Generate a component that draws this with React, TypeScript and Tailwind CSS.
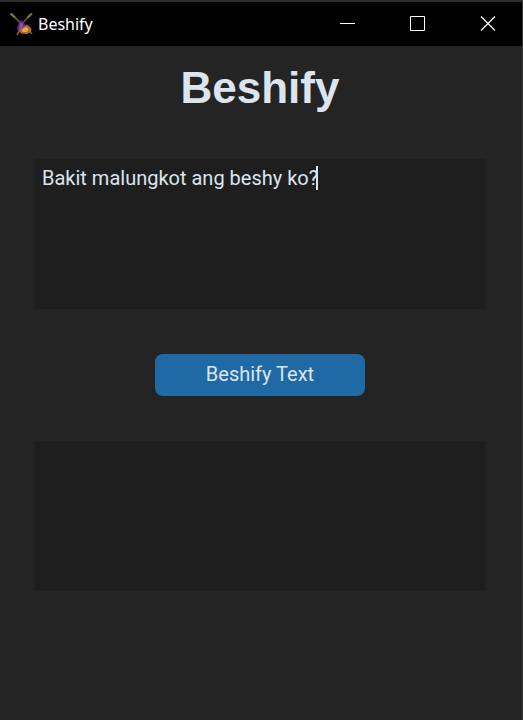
import { useState } from "react";

function WindmillIcon() {
  return (
    <svg viewBox="0 0 24 24" className="size-6 shrink-0" aria-hidden="true">
      <path d="M1.500 2 10 10.500M21 2 9 15" stroke="#5f562e" strokeWidth="1.800" fill="none" />
      <path d="M.5 1.500 5 5.500M22 1.500 17.500 5.500" stroke="#84743a" strokeWidth="2.200" fill="none" />
      <path d="M10 8.500 13 9 16 14 14 19 8 20 7 16Z" fill="#5a2a80" />
      <path d="M10 10.500 13 11 13 15 9 18Z" fill="#8b4ab8" />
      <path d="M9 18 12 16 17 12.500 21.500 16.500 21 20 17 22 11 21.500Z" fill="#b0692a" />
      <path d="M12 17.500 16 15 18.500 17 17 20 12.500 20Z" fill="#eda54a" />
      <path d="M7 23 9.500 19M20 20 22 22" stroke="#776338" strokeWidth="1.600" />
    </svg>
  );
}

function TitleBar() {
  const control = "flex h-full w-[70px] items-center justify-center text-white";
  return (
    <header className="flex h-[46px] shrink-0 items-center border-t-2 border-[#2b2b2b] bg-black pl-[10px]">
      <WindmillIcon />
      <span className="grow pl-1 font-['Noto_Sans','Open_Sans',sans-serif] text-[16px] leading-6 text-white">Beshify</span>
      <div className="-mr-px flex h-full">
        <button type="button" aria-label="Minimize" className={control}>
          <svg width="16" height="16" viewBox="0 0 16 16" shapeRendering="crispEdges">
            <path d="M0 7h15v1H0z" fill="currentColor" />
          </svg>
        </button>
        <button type="button" aria-label="Maximize" className={control}>
          <svg width="16" height="16" viewBox="0 0 16 16" fill="none" stroke="currentColor">
            <path d="M.5.5h14v14H.5z" />
          </svg>
        </button>
        <button type="button" aria-label="Close" className={control}>
          <svg width="16" height="16" viewBox="0 0 16 16" fill="none" stroke="currentColor" strokeWidth="1.200">
            <path d="M1 .5l14 14M15 .5l-14 14" />
          </svg>
        </button>
      </div>
    </header>
  );
}

const boxStyle =
  "block h-[150px] w-full resize-none bg-[#1e1e1e] px-[7px] py-[7px] text-[20px] leading-6 text-[#dce4ee] caret-transparent outline-none";

export default function App() {
  const [text, setText] = useState("Bakit malungkot ang beshy ko?");
  const [result, setResult] = useState("");

  return (
    <div className="flex min-h-screen flex-col border-r border-[#363636] bg-[#242424] font-['Roboto',sans-serif]">
      <TitleBar />
      <main className="flex flex-col items-center pr-[37px] pl-[35px]">
        <h1 className="mt-4 font-['Liberation_Sans',Arial,sans-serif] text-[44px] leading-[52px] font-bold text-[#dce4ee]">
          Beshify
        </h1>
        <div className="relative mt-[45px] w-full">
          <textarea
            aria-label="Text"
            spellCheck={false}
            value={text}
            onChange={(e) => setText(e.target.value)}
            className={boxStyle}
          />
          <span aria-hidden="true" className="absolute top-[7px] left-[281px] h-6 w-[2px] bg-[#dce4ee]" />
        </div>
        <button
          type="button"
          onClick={() => setResult(text.trim().split(/\s+/).join(" beshy "))}
          className="mt-[45px] h-[42px] w-[210px] rounded-lg bg-[#1f6aa5] pb-0.5 text-[20px] leading-6 text-[#dce4ee]"
        >
          Beshify Text
        </button>
        <textarea aria-label="Result" readOnly value={result} className={boxStyle + " mt-[45px]"} />
      </main>
    </div>
  );
}
